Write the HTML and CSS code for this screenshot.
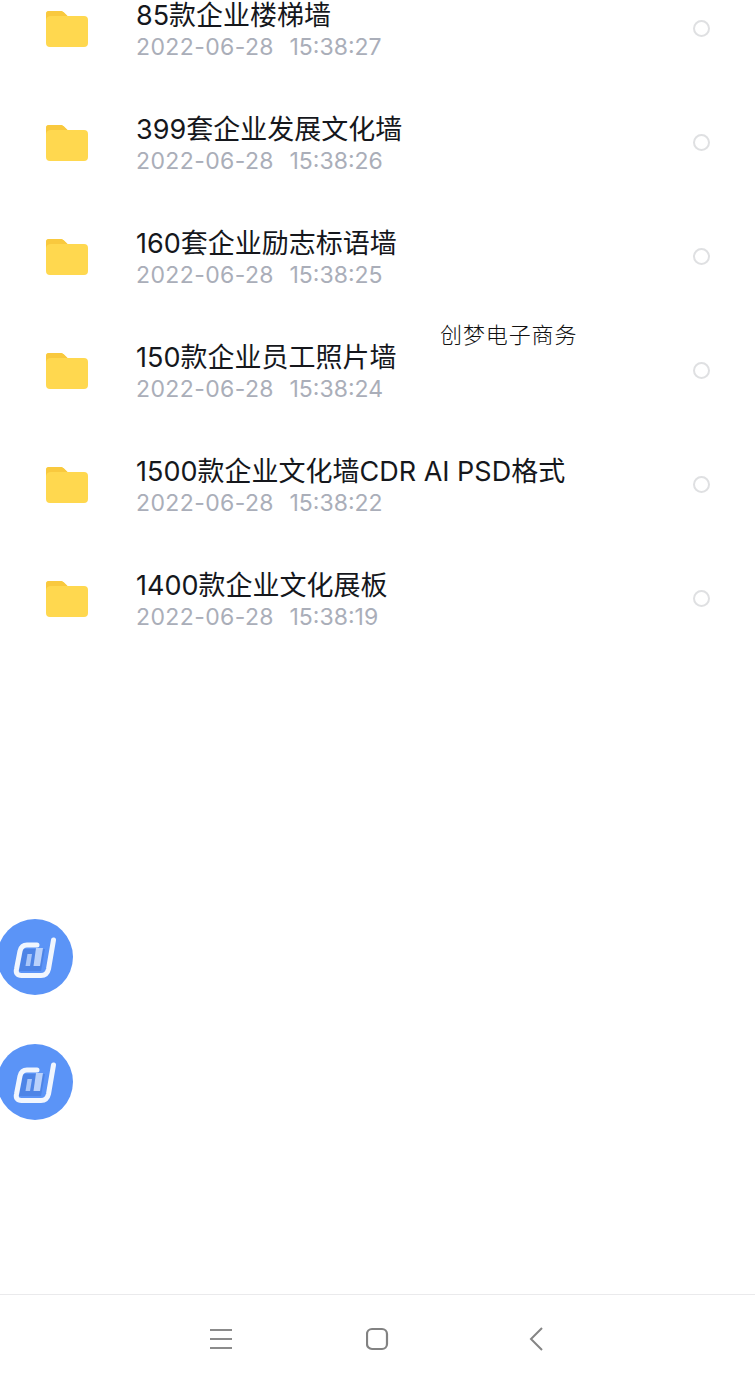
FILE: index.html
```html
<!DOCTYPE html>
<html lang="zh">
<head>
<meta charset="utf-8">
<title>文件列表</title>
<link rel="stylesheet" href="styles.css">
</head>
<body>
<svg class="defs" width="0" height="0" aria-hidden="true">
  <symbol id="folder" viewBox="0 0 42 36">
    <path d="M3 0h11c2 0 3 .6 4.200 1.800L21.500 5H38a4 4 0 0 1 4 4v23a4 4 0 0 1-4 4H4a4 4 0 0 1-4-4V3a3 3 0 0 1 3-3z" fill="#ffd84f"/>
    <path d="M3 0h11c2 0 3 .6 4.200 1.800L21.500 5H5a5 5 0 0 0-5 4V3a3 3 0 0 1 3-3z" fill="#f9c93e"/>
  </symbol>
  <symbol id="logo" viewBox="0 0 76 76">
    <circle cx="38" cy="38" r="38" fill="#5b94f7"/>
    <g transform="translate(2 0)">
      <path d="M24 30h22l-4 22H20z" fill="#4d84e6"/>
      <path d="M28.500 35h4.500l-2 12h-4.500z" fill="#a9c6f9"/>
      <path d="M37 29h7l-3 18h-6.500z" fill="#b9d1fb"/>
      <path d="M38 26H28c-4 0-6 2-7 6l-3.500 18c-1 4 1 6.500 5 6.500H42c4 0 6.500-2 7.500-6.500L54.500 21" fill="none" stroke="#f1f6fe" stroke-width="5" stroke-linecap="round" stroke-linejoin="round"/>
    </g>
  </symbol>
</svg>

<main class="file-list">
  <div class="file-row">
    <svg class="folder"><use href="#folder"/></svg>
    <div class="file-info"><div class="file-name">85款企业楼梯墙</div><div class="file-time"><span class="file-date">2022-06-28</span><span>15:38:27</span></div></div>
    <span class="radio"></span>
  </div>
  <div class="file-row">
    <svg class="folder"><use href="#folder"/></svg>
    <div class="file-info"><div class="file-name">399套企业发展文化墙</div><div class="file-time"><span class="file-date">2022-06-28</span><span>15:38:26</span></div></div>
    <span class="radio"></span>
  </div>
  <div class="file-row">
    <svg class="folder"><use href="#folder"/></svg>
    <div class="file-info"><div class="file-name">160套企业励志标语墙</div><div class="file-time"><span class="file-date">2022-06-28</span><span>15:38:25</span></div></div>
    <span class="radio"></span>
  </div>
  <div class="file-row">
    <svg class="folder"><use href="#folder"/></svg>
    <div class="file-info"><div class="file-name">150款企业员工照片墙</div><div class="file-time"><span class="file-date">2022-06-28</span><span>15:38:24</span></div></div>
    <span class="radio"></span>
  </div>
  <div class="file-row">
    <svg class="folder"><use href="#folder"/></svg>
    <div class="file-info"><div class="file-name">1500款企业文化墙CDR AI PSD格式</div><div class="file-time"><span class="file-date">2022-06-28</span><span>15:38:22</span></div></div>
    <span class="radio"></span>
  </div>
  <div class="file-row">
    <svg class="folder"><use href="#folder"/></svg>
    <div class="file-info"><div class="file-name">1400款企业文化展板</div><div class="file-time"><span class="file-date">2022-06-28</span><span>15:38:19</span></div></div>
    <span class="radio"></span>
  </div>
</main>

<div class="watermark">创梦电子商务</div>
<svg class="float-logo float-logo-a"><use href="#logo"/></svg>
<svg class="float-logo float-logo-b"><use href="#logo"/></svg>

<nav class="nav-bar">
  <svg class="nav-icon" viewBox="0 0 24 24"><path d="M1 3h22M1 12h22M1 21h22" fill="none" stroke="#8b8b8b" stroke-width="2"/></svg>
  <svg class="nav-icon" viewBox="0 0 24 24"><rect x="1" y="2" width="20" height="20" rx="5" fill="none" stroke="#828282" stroke-width="2.200"/></svg>
  <svg class="nav-icon" viewBox="0 0 24 24"><path d="M19 1 8 12l11 11" fill="none" stroke="#858585" stroke-width="2"/></svg>
</nav>
</body>
</html>
```
FILE: styles.css
```css
html, body {
  margin: 0;
  padding: 0;
  background: #fff;
}
body {
  position: relative;
  width: 755px;
  height: 1385px;
  overflow: hidden;
  display: flex;
  flex-direction: column;
  font-family: Inter, "Noto Sans CJK SC", sans-serif;
}
.defs { position: absolute; }
.file-list {
  flex: 1;
  margin-top: -29px;
}
.file-row {
  height: 114px;
  display: flex;
  align-items: center;
  padding: 0 45px 0 46px;
}
.folder {
  width: 42px;
  height: 36px;
  flex: none;
  margin-top: 1px;
}
.file-info {
  flex: 1;
  margin-left: 48px;
  margin-top: 1px;
}
.file-name {
  padding-top: 3px;
  font-size: 27px;
  line-height: 33px;
  color: #15171c;
  white-space: nowrap;
}
.file-time {
  display: flex;
  gap: 15.5px;
  font-size: 23px;
  line-height: 30px;
  color: #aaaeb9;
}
.file-date {
  letter-spacing: 0.4px;
}
.radio {
  width: 17px;
  height: 17px;
  box-sizing: border-box;
  border: 2px solid #dfe0e2;
  border-radius: 50%;
  flex: none;
}
.watermark {
  position: absolute;
  left: 440px;
  top: 319px;
  font-family: "Noto Sans CJK SC", sans-serif;
  font-size: 22px;
  font-weight: 300;
  line-height: 28px;
  letter-spacing: 0.9px;
  color: #111;
  white-space: nowrap;
}
.float-logo {
  position: absolute;
  left: -3px;
  width: 76px;
  height: 76px;
}
.float-logo-a { top: 919px; }
.float-logo-b { top: 1044px; }
.nav-bar {
  flex: none;
  height: 88px;
  padding-bottom: 2px;
  border-top: 1px solid #eaeaec;
  display: flex;
  align-items: center;
  justify-content: center;
  gap: 133px;
}
.nav-icon {
  width: 24px;
  height: 24px;
}
```
